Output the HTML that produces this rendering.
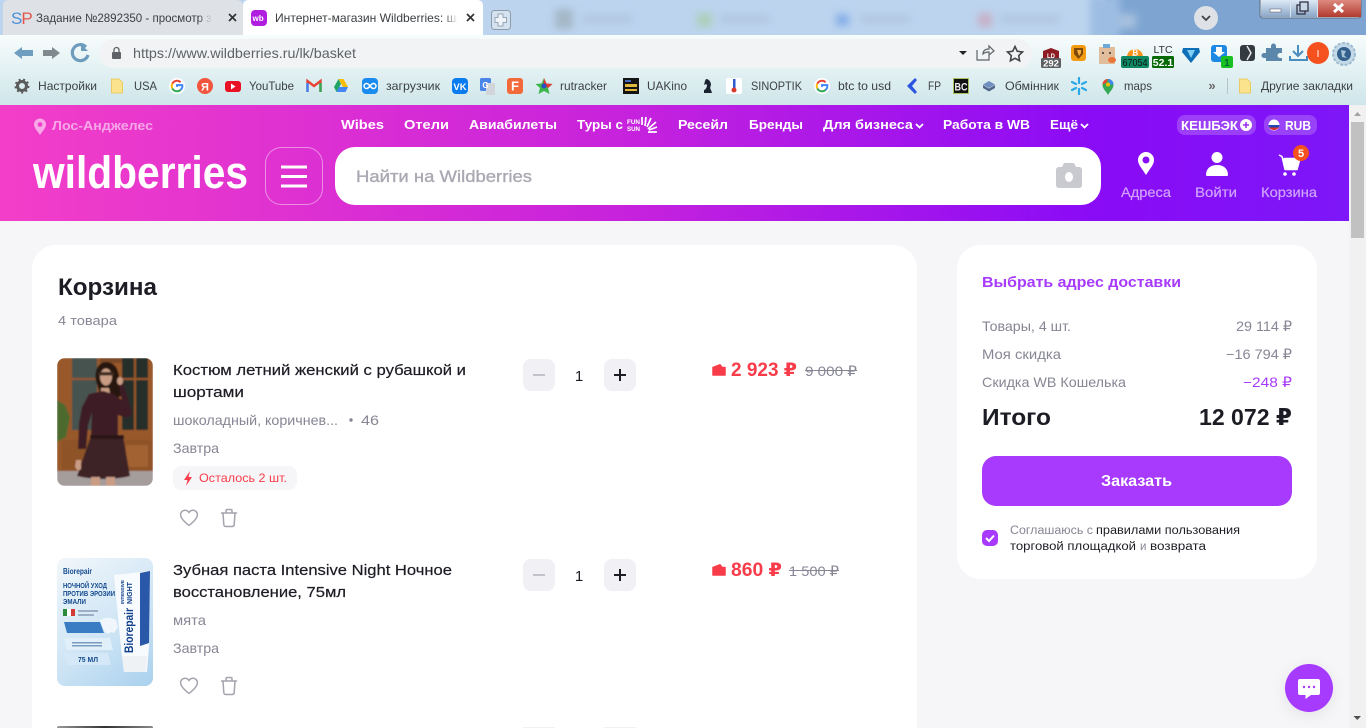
<!DOCTYPE html>
<html lang="ru"><head><meta charset="utf-8"><title>Корзина</title>
<style>
html,body{margin:0;padding:0;width:1366px;height:728px;overflow:hidden;background:#f6f6f9}
svg{display:block;position:absolute;left:0;top:0}
text{font-family:"Liberation Sans","DejaVu Sans",sans-serif;white-space:pre}
.r{font-family:"DejaVu Sans","Liberation Sans",sans-serif}
.t{font-size:12px;fill:#3c4043}
.nav{font-size:13px;font-weight:700;fill:#fff}
.g{font-size:14px;fill:#868695}
.ti{font-size:15px;fill:#1c1c24;stroke:#1c1c24;stroke-width:.2px}
.hd{font-size:14px;fill:rgba(255,255,255,.6);stroke:rgba(255,255,255,.3);stroke-width:.3px}
</style></head><body>
<svg width="1366" height="728" viewBox="0 0 1366 728" xmlns="http://www.w3.org/2000/svg">
<defs>
<linearGradient id="hg" x1="0" y1="0" x2="1366" y2="0" gradientUnits="userSpaceOnUse"><stop offset="0" stop-color="#f33ec8"/><stop offset=".45" stop-color="#c823dc"/><stop offset=".8" stop-color="#8a0bf6"/><stop offset="1" stop-color="#7c17f8"/></linearGradient>
<linearGradient id="tb" x1="0" y1="35" x2="0" y2="105" gradientUnits="userSpaceOnUse"><stop offset="0" stop-color="#f7fcfc"/><stop offset="1" stop-color="#cfe6ea"/></linearGradient>
<linearGradient id="tp" x1="57" y1="558" x2="153" y2="686" gradientUnits="userSpaceOnUse"><stop offset="0" stop-color="#f2f7fb"/><stop offset=".55" stop-color="#cfe5f5"/><stop offset="1" stop-color="#a9d1ee"/></linearGradient>
<linearGradient id="d3" x1="0" y1="0" x2="1" y2="0"><stop offset="0" stop-color="#999"/><stop offset=".5" stop-color="#333"/><stop offset="1" stop-color="#888"/></linearGradient>
<linearGradient id="ctl" x1="0" y1="0" x2="0" y2="1"><stop offset="0" stop-color="#dde9f5"/><stop offset="1" stop-color="#8aa6c6"/></linearGradient>
<linearGradient id="ctr" x1="0" y1="0" x2="0" y2="1"><stop offset="0" stop-color="#dd8a80"/><stop offset="1" stop-color="#b23a2f"/></linearGradient>
<linearGradient id="fa1" x1="0" y1="0" x2="1" y2="0"><stop offset="0" stop-color="#dee1e6" stop-opacity="0"/><stop offset="1" stop-color="#dee1e6"/></linearGradient>
<linearGradient id="fa2" x1="0" y1="0" x2="1" y2="0"><stop offset="0" stop-color="#fff" stop-opacity="0"/><stop offset="1" stop-color="#fff"/></linearGradient>
<filter id="b4"><feGaussianBlur stdDeviation="4"/></filter>
<filter id="b06"><feGaussianBlur stdDeviation=".7"/></filter>
<filter id="sh" x="-50%" y="-50%" width="200%" height="200%"><feDropShadow dx="0" dy="3" stdDeviation="7" flood-color="#000" flood-opacity=".08"/></filter>
<clipPath id="c1"><rect x="57" y="358" width="96" height="128" rx="8"/></clipPath>
<clipPath id="c2"><rect x="57" y="558" width="96" height="128" rx="8"/></clipPath>
<clipPath id="cT1"><rect x="36" y="0" width="176" height="35"/></clipPath>
<clipPath id="cT2"><rect x="275" y="0" width="183" height="35"/></clipPath>
<g id="heart"><path d="M0 7.5C-1.8 5.9-8.4 1.4-8.4-3.2-8.4-6-6.2-7.8-4-7.8-2.2-7.8-.8-6.8 0-5.4.8-6.8 2.2-7.8 4-7.8 6.2-7.8 8.4-6 8.4-3.2 8.4 1.4 1.8 5.9 0 7.5Z" fill="none" stroke="#a4a4ae" stroke-width="1.5" stroke-linejoin="round"/></g>
<g id="trash" fill="none" stroke="#a4a4ae" stroke-width="1.5" stroke-linecap="round" stroke-linejoin="round"><path d="M-7.5-5H7.5M-3-5V-7.2C-3-8-2.4-8.5-1.7-8.5H1.7C2.4-8.5 3-8 3-7.2V-5M-6-5-5.2 6.5C-5.1 7.6-4.4 8.5-3.2 8.5H3.2C4.4 8.5 5.1 7.6 5.2 6.5L6-5"/></g>
<g id="wal"><path d="M1 3.5 8 .8 10 3.500H13V11H1Z" fill="#f93c4a" stroke="#f93c4a" stroke-width="1.500" stroke-linejoin="round"/></g>
<g id="fold"><path d="M-5.5-7H2L5.5-3.5V7H-5.5Z" fill="#fbe28d" stroke="#e9c34e" stroke-width=".8"/></g>
<g id="gg"><circle r="8" fill="#fff"/><path d="M-4.7-2.3A5.3 5.3 0 0 1 3.6-3.8" stroke="#ea4335" stroke-width="2" fill="none"/><path d="M-4.7-2.3A5.3 5.3 0 0 0-4.7 2.4" stroke="#fbbc05" stroke-width="2" fill="none"/><path d="M-4.7 2.4A5.3 5.3 0 0 0 3.6 3.9" stroke="#34a853" stroke-width="2" fill="none"/><path d="M3.6 3.9A5.3 5.3 0 0 0 5.3-.9H0V.9" stroke="#4285f4" stroke-width="2" fill="none"/></g>
</defs>

<!-- browser tab strip -->
<g id="tabs">
<rect width="1366" height="35" fill="#bcd4ee"/>
<rect x="1105" width="261" height="35" fill="#7ea5d2"/>
<g filter="url(#b4)">
<rect x="1090" y="-4" width="30" height="44" fill="#9dbde2"/>
<rect x="555" y="9" width="18" height="20" fill="#7d8c8c" opacity=".4"/>
<rect x="582" y="15" width="50" height="8" fill="#8fa0b4" opacity=".25"/>
<rect x="697" y="13" width="15" height="14" fill="#98c77c" opacity=".45"/>
<rect x="720" y="15" width="50" height="8" fill="#8fa0b4" opacity=".25"/>
<rect x="836" y="14" width="13" height="12" fill="#3f7fe0" opacity=".45"/>
<rect x="860" y="15" width="50" height="8" fill="#8fa0b4" opacity=".25"/>
<rect x="978" y="13" width="14" height="14" fill="#d4859a" opacity=".45"/>
<rect x="1000" y="15" width="60" height="8" fill="#8fa0b4" opacity=".25"/>
<rect x="1120" y="14" width="16" height="14" fill="#a9c1de"/>
</g>
<path d="M3 35V6C3 2 5 0 9 0H236C240 0 243 2 243 6V35Z" fill="#dee1e6"/>
<path d="M243 35V6C243 2 245 0 249 0H477C481 0 483 2 483 6V35Z" fill="#fff"/>
<text x="11" y="24" font-size="17" fill="#e2574c" letter-spacing="-1"><tspan fill="#4a90d9">S</tspan>P</text>
<g clip-path="url(#cT1)"><text x="36" y="22" font-size="12" fill="#3c4043" textLength="182" lengthAdjust="spacingAndGlyphs">Задание №2892350 - просмотр за</text></g>
<rect x="198" y="5" width="14" height="26" fill="url(#fa1)"/>
<path d="M229 14l7 7m0-7l-7 7" stroke="#333" stroke-width="1.7"/>
<rect x="251" y="10" width="16" height="16" rx="4" fill="#b01fe0"/>
<text x="252.500" y="21" font-size="8" font-weight="700" fill="#fff">wb</text>
<g clip-path="url(#cT2)"><text x="275" y="22" font-size="12" fill="#3c4043" textLength="188" lengthAdjust="spacingAndGlyphs">Интернет-магазин Wildberries: ши</text></g>
<rect x="444" y="5" width="14" height="26" fill="url(#fa2)"/>
<path d="M467 14l7 7m0-7l-7 7" stroke="#333" stroke-width="1.7"/>
<rect x="491.500" y="10.500" width="19" height="19" rx="3" fill="#d4e3f2" stroke="#8f9ba8"/>
<path d="M498 14h5v3.500h3.500v5H503V26h-5v-3.500h-3v-5h3Z" fill="#eef4fa" stroke="#9aa6b2"/>
<circle cx="1206" cy="18" r="12" fill="#dee1e6"/>
<path d="M1202 16l4 4 4-4" fill="none" stroke="#444" stroke-width="1.800"/>
<path d="M1260 0V15C1260 17 1261 18 1263 18H1358C1360 18 1361 17 1361 15V0" fill="#d8e4f0" stroke="#5a6a7c"/>
<rect x="1261" y="0" width="29" height="17" fill="url(#ctl)"/>
<rect x="1291" y="0" width="26" height="17" fill="url(#ctl)"/>
<rect x="1318" y="0" width="43" height="17" fill="url(#ctr)"/>
<rect x="1270" y="9" width="11" height="3" fill="#fff" stroke="#556" stroke-width=".5"/>
<rect x="1297" y="5" width="8" height="9" fill="none" stroke="#334" stroke-width="1.300"/><rect x="1300" y="2" width="8" height="9" fill="#c8d6e6" stroke="#334" stroke-width="1.300"/>
<path d="M1334 4l9 8m0-8l-9 8" stroke="#fff" stroke-width="3"/>
</g>

<!-- toolbar -->
<g id="toolbar">
<rect y="35" width="1366" height="70" fill="url(#tb)"/>
<rect x="99" y="39" width="933" height="29" rx="14" fill="#f1f3f4"/>
<path d="M14 53l8-6v3h11v6H22v3Z" fill="#6f9ec0"/>
<path d="M60 53l-8-6v3H43v6h9v3Z" fill="#808a8e"/>
<path d="M86 47A8 8 0 1 0 88 55" fill="none" stroke="#6d9cbd" stroke-width="3.200"/><path d="M81 44v7h7Z" fill="#6d9cbd"/>
<rect x="112" y="52" width="9" height="7" rx="1" fill="#5f6368"/><path d="M114 52v-2a2.500 2.500 0 0 1 5 0v2" fill="none" stroke="#5f6368" stroke-width="1.300"/>
<text x="133" y="58" font-size="14" fill="#5f6368" textLength="223" lengthAdjust="spacingAndGlyphs">https://www.wildberries.ru/lk/basket</text>
<path d="M959 51h8l-4 4Z" fill="#222"/>
<path d="M977 50v10h12v-5M983 54c0-3 2-5 6-5v-3l5 5-5 4v-3c-3 0-5 1-6 2Z" fill="none" stroke="#5f6368" stroke-width="1.200"/>
<path d="M1015 46.500l2.300 4.800 5.200.7-3.800 3.600.9 5.200-4.600-2.500-4.600 2.500.9-5.200-3.800-3.600 5.200-.7Z" fill="none" stroke="#444" stroke-width="1.600"/>
<!-- extensions -->
<path d="M1043 51l8-3 8 3v8h-16Z" fill="#8c1c22"/><text x="1047" y="58" font-size="6" font-weight="700" fill="#fff">LD</text>
<rect x="1041" y="58" width="20" height="10" rx="1.500" fill="#5d5f63"/><text x="1051" y="66.500" font-size="9.500" font-weight="700" fill="#fff" text-anchor="middle">292</text>
<rect x="1071" y="45" width="15" height="16" rx="3" fill="#f39c12"/><path d="M1074 48h9v6l-4.500 5-4.500-5Z" fill="#7d4a08"/><path d="M1077 50h4v3l-2 3Z" fill="#f5b041"/>
<rect x="1099" y="47" width="16" height="17" fill="#e2bd9c"/><rect x="1103" y="44" width="7" height="4" fill="#6ea8d7"/><circle cx="1103" cy="53" r="1" fill="#333"/><circle cx="1110" cy="53" r="1" fill="#333"/><ellipse cx="1112" cy="60" rx="4" ry="3" fill="#e8763b"/>
<path d="M1127 57a8 8 0 0 1 16 0Z" fill="#f7931a"/><text x="1135" y="55.500" font-size="8" font-weight="700" fill="#fff" text-anchor="middle">₿</text>
<rect x="1121" y="56" width="28" height="12" rx="2" fill="#0d8a63"/><text x="1135" y="66" font-size="10" fill="#111" text-anchor="middle" textLength="25" lengthAdjust="spacingAndGlyphs">67054</text>
<text x="1163" y="53" font-size="10.500" fill="#333" text-anchor="middle">LTC</text>
<rect x="1152" y="56" width="22" height="12" rx="1.500" fill="#066a06"/><text x="1163" y="66" font-size="10.500" font-weight="700" fill="#fff" text-anchor="middle">52.1</text>
<path d="M1183 48h16l1 4-9 11-9-11Z" fill="#0e6fb8"/><path d="M1187 50h8l-4 8Z" fill="#7fd0f4"/>
<rect x="1211" y="45" width="16" height="17" rx="3" fill="#1e88e5"/><path d="M1216 47h6v5h3l-6 5-6-5h3Z" fill="#fff"/>
<rect x="1221" y="56" width="12" height="12" rx="2" fill="#18c022"/><text x="1227" y="66" font-size="10" font-weight="700" fill="#063" text-anchor="middle">1</text>
<rect x="1240" y="45" width="15" height="16" rx="3" fill="#333a40"/><path d="M1247 46l4 7-4 7" fill="none" stroke="#e8e8e8" stroke-width="1.500"/>
<path d="M1266 50h5v-2a2.500 2.500 0 0 1 5 0v2h6v5h-2a2.500 2.500 0 0 0 0 5h2v3h-16v-3h-2a2.500 2.500 0 0 1 0-5h2Z" fill="#5a87aa" transform="translate(0,-2)"/>
<path d="M1298 45v11m-5-5l5 5 5-5M1290 56v4h17v-4" fill="none" stroke="#4a8dbf" stroke-width="2"/>
<circle cx="1318" cy="53" r="11" fill="#f4511e"/><text x="1318" y="57" font-size="10" fill="#fff" text-anchor="middle">I</text>
<circle cx="1344" cy="54" r="11" fill="#c3d9e8" stroke="#9fbbd0" stroke-width="2" stroke-dasharray="3 1.500"/><circle cx="1344" cy="54" r="7" fill="#34608c"/><path d="M1341 50l5 1-2 4 3 3-5-1Z" fill="#a6c3d8"/>
<!-- bookmarks -->
<circle cx="22" cy="86" r="4.500" fill="none" stroke="#5b5b5b" stroke-width="3"/><circle cx="22" cy="86" r="6.500" fill="none" stroke="#5b5b5b" stroke-width="2" stroke-dasharray="2 2.500"/>
<text class="t" x="38" y="90" textLength="59" lengthAdjust="spacingAndGlyphs">Настройки</text>
<use href="#fold" x="117" y="86"/>
<text class="t" x="134" y="90" textLength="23" lengthAdjust="spacingAndGlyphs">USA</text>
<use href="#gg" x="177" y="86"/>
<circle cx="205" cy="86" r="8" fill="#f2553d"/><text x="205" y="90.500" font-size="11" font-weight="700" fill="#fff" text-anchor="middle">Я</text>
<rect x="225" y="81" width="16" height="11" rx="3" fill="#e81224"/><path d="M231 83.500l4.500 3-4.500 3Z" fill="#fff"/>
<text class="t" x="249" y="90" textLength="45" lengthAdjust="spacingAndGlyphs">YouTube</text>
<path d="M307.500 92V81l6.500 5 6.500-5v11" fill="none" stroke="#e94235" stroke-width="2.400"/><path d="M307.500 92V83" stroke="#4285f4" stroke-width="2.400"/><path d="M320.500 92V83" stroke="#34a853" stroke-width="2.400"/>
<path d="M338.500 79h5l4.500 8h-5Z" fill="#fbbc05"/><path d="M338.500 79l-4.500 8 2.500 5 4.500-8Z" fill="#1fa463"/><path d="M336.500 92h9l2.500-5h-9Z" fill="#4285f4"/>
<rect x="362" y="78" width="16" height="16" rx="4" fill="#1a8cf0"/><path d="M370 86c-1.500-2-2.500-2.500-3.500-2.500a2.500 2.500 0 0 0 0 5c1 0 2-.5 3.500-2.500s2.500-2.500 3.500-2.500a2.500 2.500 0 0 1 0 5c-1 0-2-.5-3.500-2.500Z" fill="none" stroke="#fff" stroke-width="1.500"/>
<text class="t" x="386" y="90" textLength="54" lengthAdjust="spacingAndGlyphs">загрузчик</text>
<rect x="452" y="78" width="16" height="16" rx="4" fill="#0b7bf0"/><text x="460" y="90" font-size="9.500" font-weight="700" fill="#fff" text-anchor="middle">VK</text>
<rect x="480" y="78" width="11" height="13" rx="1.500" fill="#4a86e8"/><rect x="486" y="83" width="9" height="12" fill="#d2d6da"/><text x="485.500" y="88" font-size="8" font-weight="700" fill="#fff" text-anchor="middle">G</text>
<rect x="507" y="78" width="16" height="16" rx="3" fill="#f26a3a"/><text x="515" y="90.500" font-size="13" font-weight="700" fill="#fff" text-anchor="middle">F</text>
<path d="M544 78l2.500 5.500 6 .5-4.500 4 1.500 6-5.500-3-5.500 3 1.500-6-4.500-4 6-.5Z" fill="#39b54a"/><path d="M544 78l2.500 5.500 6 .5-4.500 4-4.500-4Z" fill="#e53935"/><circle cx="544" cy="86" r="2.500" fill="#2b4dc9"/>
<text class="t" x="560" y="90" textLength="47" lengthAdjust="spacingAndGlyphs">rutracker</text>
<rect x="623" y="78" width="16" height="16" fill="#141414"/><rect x="625" y="84" width="12" height="3" fill="#e0b93c"/><rect x="625" y="80" width="6" height="2" fill="#4868b8"/><rect x="625" y="89" width="12" height="2" fill="#e0b93c"/>
<text class="t" x="647" y="90" textLength="40" lengthAdjust="spacingAndGlyphs">UAKino</text>
<path d="M704 93h8l-1-3c-1-1-1-3 0-5 0-3-2-6-5-6l-1 2-1 4 2-1 1 1c0 3-2 5-3 5Z" fill="#1a2430"/>
<rect x="726" y="78" width="16" height="16" rx="2" fill="#fff"/><rect x="733" y="79" width="2.500" height="10" fill="#2a5bd0"/><circle cx="734" cy="90" r="2.500" fill="#d9362c"/>
<text class="t" x="751" y="90" textLength="51" lengthAdjust="spacingAndGlyphs">SINOPTIK</text>
<use href="#gg" x="822" y="86"/>
<text class="t" x="838" y="90" textLength="53" lengthAdjust="spacingAndGlyphs">btc to usd</text>
<path d="M915 78l-8 8 8 8 2-2-5-6 5-6Z" fill="#2d56e0"/>
<text class="t" x="928" y="90" textLength="13" lengthAdjust="spacingAndGlyphs">FP</text>
<rect x="953" y="78" width="16" height="16" fill="#a9c25a"/><rect x="954" y="79" width="14" height="14" fill="#111"/><text x="961" y="90.500" font-size="11" font-weight="700" fill="#eee" text-anchor="middle" textLength="13" lengthAdjust="spacingAndGlyphs">BC</text>
<path d="M989 81l6 3.500-6 3.500-6-3.500Z" fill="#6f8fc0"/><path d="M983 85v3l6 3.500 6-3.500v-3l-6 3.500Z" fill="#54678c"/>
<text class="t" x="1005" y="90" textLength="54" lengthAdjust="spacingAndGlyphs">Обмінник</text>
<g stroke="#29a8e8" stroke-width="2.200" stroke-linecap="round"><path d="M1079 78v5M1079 89v5M1072 82l4 2M1086 82l-4 2M1072 90l4-2M1086 90l-4-2"/></g>
<path d="M1108 95c-2-4-5.500-6-5.500-10.500a5.500 5.500 0 0 1 11 0C1113.500 89 1110 91 1108 95Z" fill="#34a853"/><path d="M1102.500 84.500a5.500 5.500 0 0 1 5.500-5.500l-2 4Z" fill="#ea4335"/><path d="M1108 79a5.500 5.500 0 0 1 5.500 5.500h-4Z" fill="#4285f4"/><circle cx="1108" cy="84.500" r="2" fill="#fbbc05"/>
<text class="t" x="1124" y="90" textLength="28" lengthAdjust="spacingAndGlyphs">maps</text>
<text x="1212" y="90" font-size="13" font-weight="700" fill="#666" text-anchor="middle">»</text>
<rect x="1227" y="78" width="1" height="16" fill="#b8c4c8"/>
<use href="#fold" x="1245" y="86"/>
<text class="t" x="1261" y="90" textLength="92" lengthAdjust="spacingAndGlyphs">Другие закладки</text>
</g>

<!-- page -->
<rect y="105" width="1349" height="623" fill="#f6f6f9"/>
<rect x="1349" y="105" width="17" height="623" fill="#f1f1f1"/>
<rect x="1351" y="122" width="13" height="116" fill="#c1c1c1"/>
<path d="M1354 116l3.500-4 3.500 4Z" fill="#a3a3a3"/><path d="M1353.500 716h7.500l-3.700 4Z" fill="#505050"/>

<!-- header -->
<g id="header">
<rect y="105" width="1349" height="116" fill="url(#hg)"/>
<path d="M40 135c-2.500-4-6-7-6-10.500a6 6 0 0 1 12 0C46 128 42.500 131 40 135Zm0-8.200a2.300 2.300 0 1 0 0-4.600 2.300 2.300 0 0 0 0 4.600Z" fill="rgba(255,255,255,.55)" fill-rule="evenodd"/>
<text x="52" y="130" font-size="13" font-weight="700" fill="rgba(255,255,255,.55)" textLength="101" lengthAdjust="spacingAndGlyphs">Лос-Анджелес</text>
<text class="nav" x="341" y="129" textLength="43" lengthAdjust="spacingAndGlyphs">Wibes</text>
<text class="nav" x="404" y="129" textLength="45" lengthAdjust="spacingAndGlyphs">Отели</text>
<text class="nav" x="469" y="129" textLength="88" lengthAdjust="spacingAndGlyphs">Авиабилеты</text>
<text class="nav" x="577" y="129" textLength="46" lengthAdjust="spacingAndGlyphs">Туры с</text>
<text x="627" y="124" font-size="6.500" font-weight="700" fill="#fff" textLength="13" lengthAdjust="spacingAndGlyphs">FUN</text>
<text x="627" y="131" font-size="6.500" font-weight="700" fill="#fff" textLength="13" lengthAdjust="spacingAndGlyphs">SUN</text>
<g stroke="#fff" stroke-width="1.700"><path d="M642 117v8M646 117l-1 9M651 118l-4 9M656 122l-8 7M657 127l-8 3M657 132h-9"/></g>
<text class="nav" x="678" y="129" textLength="50" lengthAdjust="spacingAndGlyphs">Ресейл</text>
<text class="nav" x="749" y="129" textLength="54" lengthAdjust="spacingAndGlyphs">Бренды</text>
<text class="nav" x="823" y="129" textLength="90" lengthAdjust="spacingAndGlyphs">Для бизнеса</text>
<path d="M916 124l3.500 3.500 3.500-3.500" fill="none" stroke="#fff" stroke-width="1.800"/>
<text class="nav" x="943" y="129" textLength="87" lengthAdjust="spacingAndGlyphs">Работа в WB</text>
<text class="nav" x="1050" y="129" textLength="28" lengthAdjust="spacingAndGlyphs">Ещё</text>
<path d="M1081 124l3.500 3.500 3.500-3.500" fill="none" stroke="#fff" stroke-width="1.800"/>
<rect x="1177" y="115" width="79" height="20" rx="8" fill="rgba(255,255,255,.2)"/>
<text x="1181" y="130" font-size="13" font-weight="700" fill="#fff" textLength="57" lengthAdjust="spacingAndGlyphs">КЕШБЭК</text>
<circle cx="1246" cy="125" r="6" fill="#fff"/><path d="M1246 122v6M1243 125h6" stroke="#9a2bf0" stroke-width="1.500"/>
<rect x="1264" y="115" width="53" height="20" rx="8" fill="rgba(255,255,255,.2)"/>
<circle cx="1274" cy="125" r="5.500" fill="#fff"/><path d="M1268.500 125h11a5.500 5.500 0 0 1-.7 2.500h-9.600a5.500 5.500 0 0 1-.7-2.500Z" fill="#2148b0"/><path d="M1269.300 127.500h9.400a5.500 5.500 0 0 1-9.400 0Z" fill="#d92c2c"/>
<text x="1285" y="130" font-size="13" font-weight="700" fill="#fff" textLength="26" lengthAdjust="spacingAndGlyphs">RUB</text>
<text x="33" y="188" font-size="45" font-weight="700" fill="#fff" textLength="215" lengthAdjust="spacingAndGlyphs">wildberries</text>
<rect x="265.500" y="147.500" width="57" height="57" rx="16" fill="none" stroke="rgba(255,255,255,.45)"/>
<path d="M281 167h26M281 176.500h26M281 186h26" stroke="#fff" stroke-width="3"/>
<rect x="335" y="147" width="766" height="58" rx="20" fill="#fff"/>
<text x="356" y="182" font-size="17" fill="#a9a9b3" stroke="#a9a9b3" stroke-width=".35" textLength="176" lengthAdjust="spacingAndGlyphs">Найти на Wildberries</text>
<path d="M1064 163h10l2 4h3c1.700 0 3 1.300 3 3v15c0 1.700-1.300 3-3 3h-20c-1.700 0-3-1.300-3-3v-15c0-1.700 1.300-3 3-3h3Z" fill="#c9c9d0"/><ellipse cx="1069" cy="177" rx="4" ry="5" fill="#fff"/>
<path d="M1146 175c-3.500-6-8-10-8-15a8 8 0 0 1 16 0C1154 165 1149.500 169 1146 175Zm0-11.500a3.500 3.500 0 1 0 0-7 3.500 3.500 0 0 0 0 7Z" fill="#fff" fill-rule="evenodd"/>
<text class="hd" x="1121" y="197" textLength="50" lengthAdjust="spacingAndGlyphs">Адреса</text>
<circle cx="1217" cy="157.500" r="5.500" fill="#fff"/><path d="M1206 175c0-6 4-10 11-10s11 4 11 10c0 .5-.5 1-1 1h-20c-.5 0-1-.5-1-1Z" fill="#fff"/>
<text class="hd" x="1195" y="197" textLength="42" lengthAdjust="spacingAndGlyphs">Войти</text>
<path d="M1279 155l3 1.500 3 13h12l3-11h-16" fill="#fff" stroke="#fff" stroke-width="1.500" stroke-linejoin="round"/><circle cx="1285" cy="174" r="1.800" fill="#fff"/><circle cx="1294" cy="174" r="1.800" fill="#fff"/>
<circle cx="1301" cy="153" r="8" fill="#f4511e"/><text x="1301" y="157" font-size="11" font-weight="700" fill="#fff" text-anchor="middle">5</text>
<text class="hd" x="1261" y="197" textLength="56" lengthAdjust="spacingAndGlyphs">Корзина</text>
</g>

<!-- basket card -->
<g id="basket">
<path d="M32 728V269a24 24 0 0 1 24-24H893a24 24 0 0 1 24 24V728Z" fill="#fff"/>
<text x="58" y="295" font-size="24" font-weight="700" fill="#1c1c24" textLength="99" lengthAdjust="spacingAndGlyphs">Корзина</text>
<text x="58" y="325" font-size="13" fill="#868695" textLength="59" lengthAdjust="spacingAndGlyphs">4 товара</text>

<!-- item 1 -->
<g clip-path="url(#c1)"><g filter="url(#b06)">
<rect x="57" y="358" width="96" height="128" fill="#98582c"/>
<rect x="72" y="358" width="25" height="72" fill="#47524f"/><rect x="122" y="358" width="26" height="72" fill="#262e2b"/>
<rect x="72" y="378" width="25" height="2" fill="#98582c"/><rect x="122" y="378" width="26" height="2" fill="#98582c"/>
<rect x="134" y="358" width="2" height="72" fill="#98582c"/>
<rect x="100" y="358" width="22" height="5" fill="#7c4a28"/>
<rect x="62" y="440" width="90" height="30" fill="#8e5228"/><rect x="126" y="445" width="22" height="22" fill="#a26233"/>
<rect x="57" y="471" width="96" height="15" fill="#a59c9c"/>
<path d="M57 400l8 5 5 12-4 20-9 5Z" fill="#4d6a2e"/>
<path d="M97 384c-4-10 0-22 9-22 8 0 12 6 13 14l2 10 2 8-5 4-18-4Z" fill="#251410"/>
<ellipse cx="106" cy="377" rx="6" ry="8.500" fill="#c99c84"/>
<rect x="98" y="372" width="16" height="3.500" rx="1.700" fill="#3d2a22"/>
<path d="M101 388h8l1 5 -9 0Z" fill="#c99c84"/>
<path d="M89 394l14-3 10 3 9 6 8 9 2 6-5 3-9-3 0 20H91l1-23-4 14-2 23-8 0 1-26 3-16Z" fill="#3c1f25"/>
<path d="M119 383l4-1 6 20 3 11-5 4-6-20Z" fill="#3c1f25"/><ellipse cx="120" cy="381" rx="3" ry="4" fill="#c99c84"/>
<path d="M91 436h32l7 40c-16 4-36 4-53 0Z" fill="#3e2028"/>
<rect x="90" y="435" width="34" height="4" fill="#2c1318"/>
<rect x="91" y="477" width="9" height="9" fill="#c99c84"/><rect x="106" y="477" width="9" height="9" fill="#c99c84"/>
<path d="M76 460l5 0 0 9-3 2-3-4Z" fill="#c99c84"/>
</g></g>
<text class="ti" x="173" y="375" textLength="293" lengthAdjust="spacingAndGlyphs">Костюм летний женский с рубашкой и</text>
<text class="ti" x="173" y="397" textLength="71" lengthAdjust="spacingAndGlyphs">шортами</text>
<text class="g" x="173" y="425" textLength="165" lengthAdjust="spacingAndGlyphs">шоколадный, коричнев...</text>
<circle cx="351" cy="420" r="1.700" fill="#868695"/>
<text class="g" x="361" y="425" textLength="18" lengthAdjust="spacingAndGlyphs">46</text>
<text class="g" x="173" y="453" textLength="46" lengthAdjust="spacingAndGlyphs">Завтра</text>
<rect x="173" y="466" width="124" height="24" rx="8" fill="#f6f6f9"/>
<path d="M190 471l-6 9h3.500l-1.500 6 6-9h-3.500Z" fill="#f93c4a"/>
<text x="199" y="482" font-size="12" fill="#f93c4a" textLength="88" lengthAdjust="spacingAndGlyphs">Осталось 2 шт.</text>
<use href="#heart" x="189" y="518"/><use href="#trash" x="229" y="518"/>
<g id="qty1">
<rect x="523" y="359" width="32" height="32" rx="8" fill="#f0f0f5"/><path d="M533 375h12" stroke="#c2c2ca" stroke-width="2"/>
<text x="579" y="381" font-size="15" fill="#1c1c24" text-anchor="middle">1</text>
<rect x="604" y="359" width="32" height="32" rx="8" fill="#f0f0f5"/><path d="M614 375h12M620 369v12" stroke="#1c1c24" stroke-width="2"/>
</g>
<use href="#wal" x="712" y="364"/>
<text x="731" y="376" font-size="19" font-weight="700" fill="#f93c4a" textLength="66" lengthAdjust="spacingAndGlyphs">2 923 <tspan class="r">₽</tspan></text>
<text x="805" y="376" font-size="14" fill="#868695" textLength="52" lengthAdjust="spacingAndGlyphs">9 000 <tspan class="r">₽</tspan></text><rect x="805" y="370" width="52" height="1" fill="#868695"/>

<!-- item 2 -->
<g clip-path="url(#c2)">
<rect x="57" y="558" width="96" height="128" fill="url(#tp)"/>
<text x="63" y="574" font-size="8" font-weight="700" fill="#134a8e" textLength="29" lengthAdjust="spacingAndGlyphs">Biorepair</text>
<g font-size="7" font-weight="700" fill="#134a8e"><text x="63" y="588" textLength="44" lengthAdjust="spacingAndGlyphs">НОЧНОЙ УХОД</text><text x="63" y="596" textLength="52" lengthAdjust="spacingAndGlyphs">ПРОТИВ ЭРОЗИИ</text><text x="63" y="604" textLength="23" lengthAdjust="spacingAndGlyphs">ЭМАЛИ</text></g>
<rect x="63" y="609" width="4" height="7" fill="#2c8c3c"/><rect x="67" y="609" width="4" height="7" fill="#fff"/><rect x="71" y="609" width="4" height="7" fill="#d23a3a"/>
<rect x="78" y="610" width="20" height="2" fill="#9bb0c4"/><rect x="78" y="614" width="16" height="2" fill="#9bb0c4"/>
<path d="M64 622h36l4 11H67Z" fill="#3a7cc4"/>
<path d="M100 620c5-3 12-3 16 0l2 7-4 6-3-1-3 2-4-3Z" fill="#f0f6fb"/>
<path d="M64 638h46l3 12H67Z" fill="#e1eff9"/><rect x="72" y="642" width="30" height="1.500" fill="#7a9cc0"/><rect x="72" y="645" width="30" height="1.500" fill="#7a9cc0"/>
<path d="M64 653h44l3 12H67Z" fill="#d4e8f7"/>
<text x="78" y="662" font-size="7" font-weight="700" fill="#134a8e" textLength="20" lengthAdjust="spacingAndGlyphs">75 МЛ</text>
<path d="M114 575l36-4-1 75-2 26-23 0-3-24Z" fill="#f8fbfd"/>
<path d="M140 573l10-2-1 72-9 3Z" fill="#2958a8"/>
<path d="M122 656h25l-1 16h-22Z" fill="#eef2f5"/>
<text transform="translate(133,653) rotate(-90)" font-size="12" font-weight="700" fill="#0f3f8a" textLength="45" lengthAdjust="spacingAndGlyphs">Biorepair</text>
<text transform="translate(124,604) rotate(-90)" font-size="4.500" font-weight="700" fill="#0f3f8a" textLength="24" lengthAdjust="spacingAndGlyphs">INTENSIVE</text>
<text transform="translate(132,604) rotate(-90)" font-size="7" font-weight="700" fill="#0f3f8a" textLength="22" lengthAdjust="spacingAndGlyphs">NIGHT</text>
</g>
<text class="ti" x="173" y="575" textLength="279" lengthAdjust="spacingAndGlyphs">Зубная паста Intensive Night Ночное</text>
<text class="ti" x="173" y="597" textLength="173" lengthAdjust="spacingAndGlyphs">восстановление, 75мл</text>
<text class="g" x="173" y="625" textLength="33" lengthAdjust="spacingAndGlyphs">мята</text>
<text class="g" x="173" y="653" textLength="46" lengthAdjust="spacingAndGlyphs">Завтра</text>
<use href="#heart" x="189" y="686"/><use href="#trash" x="229" y="686"/>
<rect x="523" y="559" width="32" height="32" rx="8" fill="#f0f0f5"/><path d="M533 575h12" stroke="#c2c2ca" stroke-width="2"/>
<text x="579" y="581" font-size="15" fill="#1c1c24" text-anchor="middle">1</text>
<rect x="604" y="559" width="32" height="32" rx="8" fill="#f0f0f5"/><path d="M614 575h12M620 569v12" stroke="#1c1c24" stroke-width="2"/>
<use href="#wal" x="712" y="564"/>
<text x="731" y="576" font-size="19" font-weight="700" fill="#f93c4a" textLength="51" lengthAdjust="spacingAndGlyphs">860 <tspan class="r">₽</tspan></text>
<text x="789" y="576" font-size="14" fill="#868695" textLength="50" lengthAdjust="spacingAndGlyphs">1 500 <tspan class="r">₽</tspan></text><rect x="789" y="570" width="50" height="1" fill="#868695"/>

<!-- item 3 peek -->
<path d="M57 728v-1a2 2 0 0 1 2-1h92a2 2 0 0 1 2 1v1Z" fill="url(#d3)"/>
<rect x="523" y="727" width="32" height="1" fill="#f0f0f5"/><rect x="604" y="727" width="32" height="1" fill="#f0f0f5"/>
</g>

<!-- summary -->
<g id="summary">
<rect x="957" y="245" width="360" height="334" rx="24" fill="#fff"/>
<text x="982" y="287" font-size="15" font-weight="700" fill="#a73afd" textLength="199" lengthAdjust="spacingAndGlyphs">Выбрать адрес доставки</text>
<text class="g" x="982" y="331" textLength="89" lengthAdjust="spacingAndGlyphs">Товары, 4 шт.</text>
<text class="g" x="1236" y="331" textLength="56" lengthAdjust="spacingAndGlyphs">29 114 <tspan class="r">₽</tspan></text>
<text class="g" x="982" y="359" textLength="79" lengthAdjust="spacingAndGlyphs">Моя скидка</text>
<text class="g" x="1226" y="359" textLength="66" lengthAdjust="spacingAndGlyphs">−16 794 <tspan class="r">₽</tspan></text>
<text class="g" x="982" y="387" textLength="144" lengthAdjust="spacingAndGlyphs">Скидка WB Кошелька</text>
<text x="1243" y="387" font-size="14" fill="#a73afd" textLength="49" lengthAdjust="spacingAndGlyphs">−248 <tspan class="r">₽</tspan></text>
<text x="982" y="425" font-size="23" font-weight="700" fill="#1c1c24" textLength="69" lengthAdjust="spacingAndGlyphs">Итого</text>
<text x="1199" y="425" font-size="23" font-weight="700" fill="#1c1c24" textLength="93" lengthAdjust="spacingAndGlyphs">12 072 <tspan class="r">₽</tspan></text>
<rect x="982" y="456" width="310" height="50" rx="14" fill="#a73afd"/>
<text x="1101" y="486" font-size="16" font-weight="700" fill="#fff" textLength="71" lengthAdjust="spacingAndGlyphs">Заказать</text>
<rect x="982" y="530" width="16" height="16" rx="5" fill="#a73afd"/><path d="M986 538l3 3 5-5.500" fill="none" stroke="#fff" stroke-width="2"/>
<text x="1010" y="534" font-size="11.500" fill="#868695" textLength="83" lengthAdjust="spacingAndGlyphs">Соглашаюсь с</text>
<text x="1096" y="534" font-size="11.500" fill="#1c1c24" textLength="144" lengthAdjust="spacingAndGlyphs">правилами пользования</text>
<text x="1010" y="550" font-size="11.500" fill="#1c1c24" textLength="126" lengthAdjust="spacingAndGlyphs">торговой площадкой</text>
<text x="1140" y="550" font-size="11.500" fill="#868695">и</text>
<text x="1150" y="550" font-size="11.500" fill="#1c1c24" textLength="56" lengthAdjust="spacingAndGlyphs">возврата</text>
</g>

<!-- chat -->
<circle cx="1309" cy="688" r="24" fill="#a73afd" filter="url(#sh)"/>
<path d="M1300 679h18c1.200 0 2 .8 2 2v12c0 1.200-.8 2-2 2h-7l-5.500 4v-4h-5.500c-1.200 0-2-.8-2-2v-12c0-1.200.8-2 2-2Z" fill="#fff"/>
<circle cx="1304" cy="687" r="1.200" fill="#a73afd"/><circle cx="1309" cy="687" r="1.200" fill="#a73afd"/><circle cx="1314" cy="687" r="1.200" fill="#a73afd"/>
</svg>
</body></html>
